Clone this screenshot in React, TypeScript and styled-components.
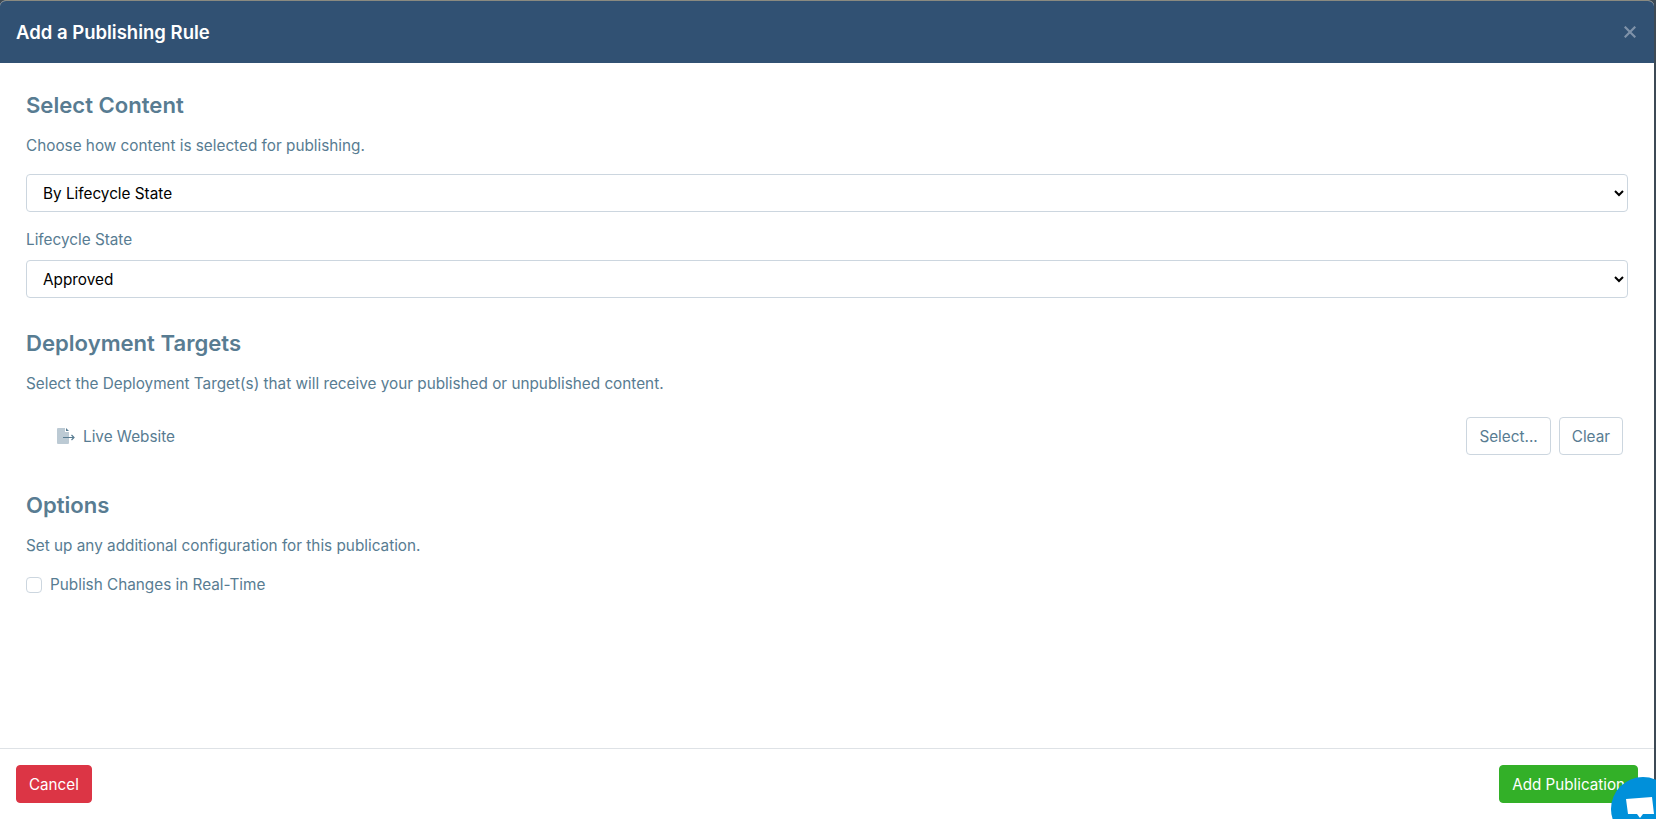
import React from "react";
import styled, { createGlobalStyle } from "styled-components";

const Global = createGlobalStyle`
  html, body { margin: 0; padding: 0; height: 100%; background: #fff; overflow: hidden; }
  #root { height: 100%; }
  * { box-sizing: border-box; }
`;

const Page = styled.div`
  height: 819px;
  width: 1656px;
  background: #3d4a55;
  overflow: hidden;
  position: relative;
  font-family: Inter, "Liberation Sans", sans-serif;
  color: #587c92;
`;

const Dialog = styled.div`
  width: 1654px;
  height: 819px;
  background: #fff;
  border-top: 1px solid #8a8a80;
  border-radius: 6px 6px 0 0;
  display: flex;
  flex-direction: column;
  overflow: hidden;
`;

const Header = styled.header`
  height: 62px;
  flex: none;
  background: #315173;
  display: flex;
  align-items: center;
  justify-content: space-between;
  padding: 0 18px 0 16px;
`;

const DialogTitle = styled.h1`
  margin: 0;
  font-size: 18.5px;
  font-weight: 600;
  color: #fff;
`;

const Close = styled.button`
  border: 0;
  background: none;
  padding: 0;
  display: flex;
  color: #7f92a9;
`;

const Body = styled.main`
  flex: 1;
  padding: 28px 26px 0 26px;
  min-height: 0;
`;

const SectionTitle = styled.h2`
  margin: 0 0 15px;
  font-size: 22.1px;
  line-height: 28px;
  font-weight: 600;
  color: #587c92;
`;

const Help = styled.p`
  margin: 0 0 16px;
  font-size: 15.3px;
  line-height: 24px;
`;

const Section = styled.section`
  margin-bottom: 31px;
`;

const Label = styled.label`
  display: block;
  font-size: 15.3px;
  line-height: 24px;
  margin: 0 0 8px;
`;

const Select = styled.select`
  display: block;
  width: 100%;
  height: 38px;
  padding: 0 12px;
  font-family: inherit;
  font-size: 15.3px;
  color: #000;
  background: #fff;
  border: 1px solid #ccd6df;
  border-radius: 4px;
  margin-bottom: 16px;
`;

const TargetRow = styled.div`
  display: flex;
  align-items: center;
  justify-content: space-between;
  margin: 21px 0 36px;
  padding: 0 5px 0 31px;
  height: 38px;
`;

const TargetName = styled.div`
  display: flex;
  align-items: center;
  gap: 8px;
  font-size: 15.3px;
`;

const TargetActions = styled.div`
  display: flex;
  gap: 8px;
`;

const OutlineButton = styled.button`
  height: 38px;
  padding: 0 12px;
  background: #fff;
  border: 1px solid #ccd6df;
  border-radius: 4px;
  font-family: inherit;
  font-size: 15.3px;
  color: #587c92;
`;

const CheckRow = styled.label`
  display: flex;
  align-items: center;
  gap: 8px;
  margin-top: -1px;
  font-size: 15.3px;
  line-height: 24px;
`;

const CheckBox = styled.span`
  width: 16px;
  height: 16px;
  border: 1px solid #ccd6df;
  border-radius: 4px;
`;

const Footer = styled.footer`
  height: 71px;
  flex: none;
  border-top: 1px solid #dee2e6;
  padding: 0 16px;
  display: flex;
  justify-content: space-between;
  align-items: center;
`;

const SolidButton = styled.button<{ $bg: string }>`
  height: 38px;
  padding: 0 12px;
  border: 1px solid ${(p) => p.$bg};
  border-radius: 4px;
  background: ${(p) => p.$bg};
  color: #fff;
  font-family: inherit;
  font-size: 15.2px;
`;

const Chat = styled.div`
  position: absolute;
  left: 1611px;
  top: 777px;
  width: 64px;
  height: 64px;
  border-radius: 50%;
  background: #0090da;
`;

const ChatIcon = styled.svg`
  position: absolute;
  left: 15px;
  top: 17px;
`;

export default function App() {
  return (
    <Page>
      <Global />
      <Dialog>
        <Header>
          <DialogTitle>Add a Publishing Rule</DialogTitle>
          <Close aria-label="Close">
            <svg width="12" height="12" viewBox="0 0 12 12">
              <path d="M0.7 0.7L11.3 11.3M11.3 0.7L0.7 11.3" stroke="currentColor" strokeWidth="2.2" />
            </svg>
          </Close>
        </Header>
        <Body>
          <Section>
            <SectionTitle>Select Content</SectionTitle>
            <Help>Choose how content is selected for publishing.</Help>
            <Select defaultValue="state">
              <option value="state">By Lifecycle State</option>
            </Select>
            <Label>Lifecycle State</Label>
            <Select defaultValue="approved">
              <option value="approved">Approved</option>
            </Select>
          </Section>
          <section>
            <SectionTitle>Deployment Targets</SectionTitle>
            <Help>Select the Deployment Target(s) that will receive your published or unpublished content.</Help>
            <TargetRow>
              <TargetName>
                <svg width="18" height="16" viewBox="0 0 18 16">
                  <path d="M0 1a1 1 0 0 1 1-1h7v4h4v11a1 1 0 0 1-1 1H1a1 1 0 0 1-1-1z" fill="#bccad4" />
                  <path d="M9 0l3 3H9z" fill="#587c92" />
                  <path d="M6 9.5h11M14.5 7l2.5 2.5L14.5 12" fill="none" stroke="#587c92" strokeWidth="1.2" />
                </svg>
                Live Website
              </TargetName>
              <TargetActions>
                <OutlineButton>Select...</OutlineButton>
                <OutlineButton>Clear</OutlineButton>
              </TargetActions>
            </TargetRow>
          </section>
          <section>
            <SectionTitle>Options</SectionTitle>
            <Help>Set up any additional configuration for this publication.</Help>
            <CheckRow>
              <CheckBox />
              Publish Changes in Real-Time
            </CheckRow>
          </section>
        </Body>
        <Footer>
          <SolidButton $bg="#dc3545">Cancel</SolidButton>
          <SolidButton $bg="#33b028">Add Publication</SolidButton>
        </Footer>
      </Dialog>
      <Chat>
        <ChatIcon width="28" height="24" viewBox="0 0 28 24">
          <path d="M0 5L26 3L28 20H17L14 24L11 20H2z" fill="#fff" />
        </ChatIcon>
      </Chat>
    </Page>
  );
}
